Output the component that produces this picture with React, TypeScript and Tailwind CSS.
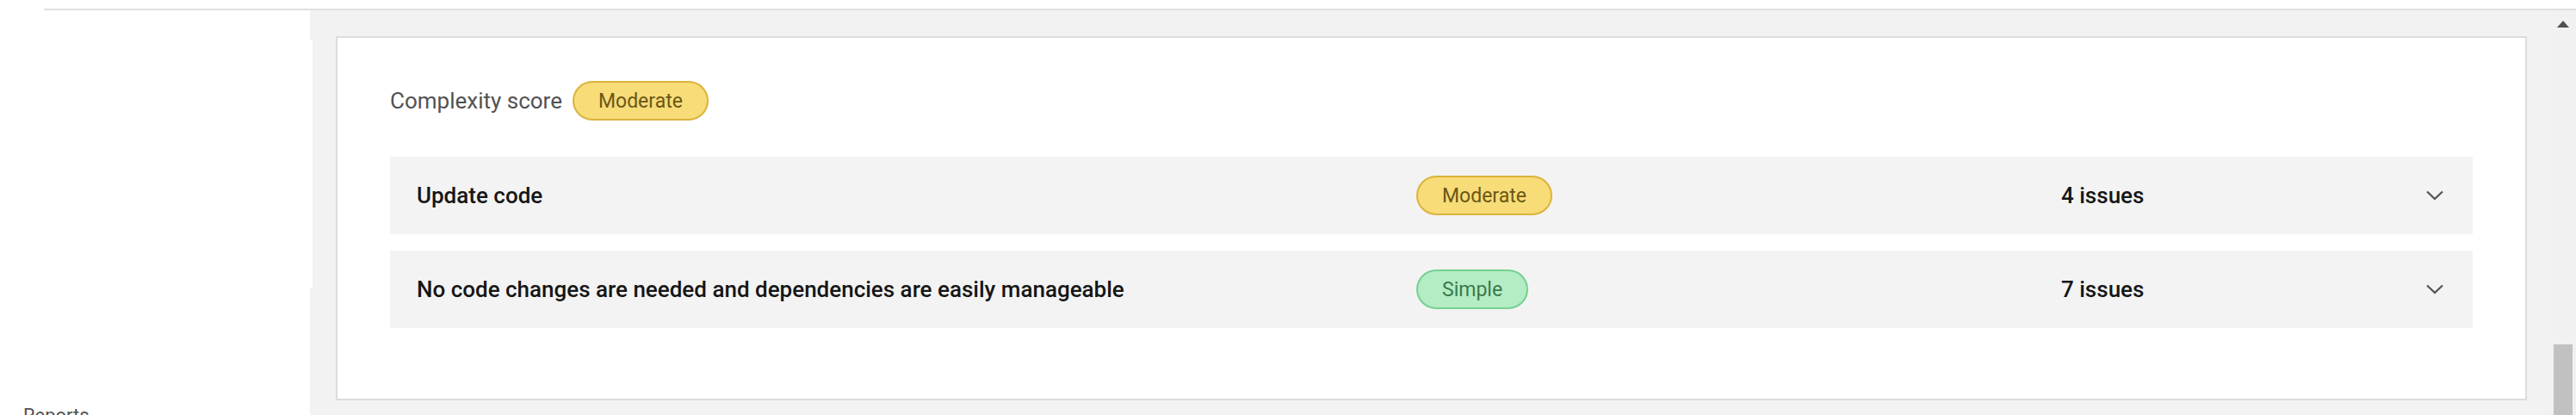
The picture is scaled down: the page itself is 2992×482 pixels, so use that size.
import React from "react";

interface Finding {
  title: string;
  level: "Moderate" | "Simple";
  issues: number;
}

const findings: Finding[] = [
  { title: "Update code", level: "Moderate", issues: 4 },
  { title: "No code changes are needed and dependencies are easily manageable", level: "Simple", issues: 7 },
];

function LevelTag({ level }: { level: Finding["level"] }) {
  const cls =
    level === "Moderate"
      ? "bg-[#f7dc78] border-[#dcb33c] text-[#6b5714]"
      : "bg-[#b4ecc4] border-[#74d18f] text-[#3a7a4a]";
  return (
    <span className={`inline-flex items-center h-[46px] px-[28px] rounded-full border-2 text-[23px] leading-none ${cls}`}>
      {level}
    </span>
  );
}

function Chevron() {
  return (
    <svg width="20" height="12" viewBox="0 0 20 12" fill="none">
      <path d="M1 1.5 L10 10 L19 1.5" stroke="#525252" strokeWidth="2.2" />
    </svg>
  );
}

export default function App() {
  return (
    <div className="w-[2992px] h-[482px] bg-white overflow-hidden flex flex-col font-['Roboto',sans-serif]">
      <div className="h-[10px] shrink-0" />
      <div className="h-[2px] ml-[51px] bg-[#e0e0e0] shrink-0" />

      <div className="flex flex-1 min-h-0">
        {/* Sidebar */}
        <div className="w-[360px] shrink-0 flex flex-col">
          <div className="h-[35px]" />
          <div className="w-[363px] h-[288px] bg-white relative z-10" />
          <div className="flex-1 flex flex-col justify-end">
            <div className="pl-[27px] text-[22px] leading-[26px] text-[#525252] mb-[-14px]">Reports</div>
          </div>
        </div>

        {/* Main */}
        <div className="flex-1 bg-[#f2f2f2] pt-[30px] pl-[30px] pr-[27px]">
          <div className="h-[423px] bg-white border-2 border-[#dcdcdc] pl-[61px] pr-[61px] pt-[50px]">
            <div className="flex items-center gap-[12px] h-[46px]">
              <span className="text-[26px] text-[#525252]">Complexity score</span>
              <LevelTag level="Moderate" />
            </div>

            <div className="mt-[42px] flex flex-col gap-[19px]">
              {findings.map(f => (
                <div key={f.title} className="h-[90px] bg-[#f3f3f3] flex items-center pl-[31px] pr-[34px]">
                  <div className="w-[1161px] text-[26px] font-medium text-[#161616]">{f.title}</div>
                  <div className="w-[749px]">
                    <LevelTag level={f.level} />
                  </div>
                  <div className="flex-1 text-[26px] font-medium text-[#161616]">{f.issues} issues</div>
                  <Chevron />
                </div>
              ))}
            </div>
          </div>
        </div>

        {/* Scrollbar */}
        <div className="w-[30px] shrink-0 bg-[#f1f1f1] flex flex-col items-center">
          <div className="mt-[12px] w-0 h-0 border-l-[7px] border-r-[7px] border-b-[8px] border-l-transparent border-r-transparent border-b-[#505050]" />
          <div className="flex-1" />
          <div className="w-[22px] h-[82px] bg-[#c1c1c1]" />
        </div>
      </div>
    </div>
  );
}
